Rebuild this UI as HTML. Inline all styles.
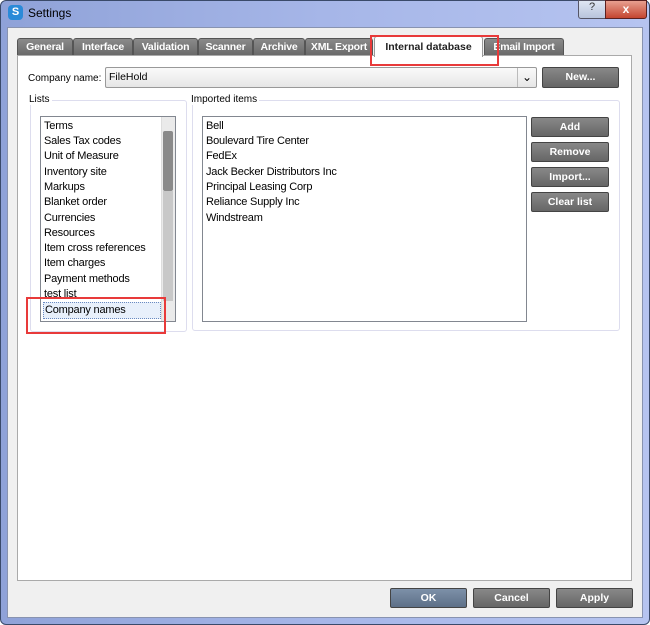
<!DOCTYPE html><html><head><style>
body{margin:0;width:650px;height:625px;overflow:hidden;background:#fff;font-family:"Liberation Sans",Tahoma,sans-serif;font-size:11px;}
.abs{position:absolute}
.frame{left:0;top:0;width:648px;height:623px;border:1px solid #3a4a6a;border-radius:6px;background:linear-gradient(90deg,#8fa2d8,#a6b6e8 50%,#b6c4f0);}
.client{left:7px;top:27px;width:634px;height:589px;background:#f0f0f0;border:1px solid #8893b0;}
.tab{top:38px;height:16px;background:linear-gradient(#8a8a8a,#6a6a6a);border:1px solid #555;border-bottom:none;border-radius:3px 3px 0 0;color:#fff;font-weight:bold;font-size:10.5px;text-align:center;line-height:16px;letter-spacing:-0.2px;white-space:nowrap;overflow:hidden}
.panel{left:17px;top:55px;width:613px;height:524px;background:#fff;border:1px solid #aaa;}
.btn{height:18px;background:linear-gradient(#888,#666);border:1px solid #444;border-radius:2px;color:#fff;font-weight:bold;text-align:center;line-height:18px;font-size:10.5px;}
.grp{border:1px solid #dde;border-radius:3px;}
.lb{background:#fff;border:1px solid #828790;}
.it{position:absolute;left:3px;font-size:11px;color:#000;white-space:nowrap;letter-spacing:-0.2px}
.red{border:2px solid #e83a3a;}
</style></head><body>
<div class="abs frame"></div>
<div class="abs" style="left:8px;top:5px;width:15px;height:15px;border-radius:4px;background:#2a8ad8;color:#fff;font-weight:bold;font-size:11px;text-align:center;line-height:15px">S</div>
<div class="abs" style="left:28px;top:6px;font-size:12px;color:#000">Settings</div>
<div class="abs" style="left:578px;top:0;width:26px;height:17px;border:1px solid #556;border-radius:0 0 0 3px;background:linear-gradient(#dfe6f3,#b8c4dc);text-align:center;font-size:11px;color:#333">?</div>
<div class="abs" style="left:605px;top:0;width:40px;height:17px;border:1px solid #5a2020;border-radius:0 0 3px 0;background:linear-gradient(#e8a090,#c44530);text-align:center;color:#fff;font-weight:bold;font-size:12px;line-height:16px">x</div>
<div class="abs client"></div>
<div class="abs tab" style="left:17px;width:54px">General</div>
<div class="abs tab" style="left:73px;width:58px">Interface</div>
<div class="abs tab" style="left:133px;width:63px">Validation</div>
<div class="abs tab" style="left:198px;width:53px">Scanner</div>
<div class="abs tab" style="left:253px;width:50px">Archive</div>
<div class="abs tab" style="left:305px;width:66px">XML Export</div>
<div class="abs tab" style="left:484px;width:78px">Email Import</div>
<div class="abs panel"></div>
<div class="abs" style="left:374px;top:36px;width:107px;height:20px;background:#fff;border:1px solid #999;border-bottom:none;border-radius:3px 3px 0 0;font-weight:bold;color:#222;text-align:center;line-height:20px;font-size:10.5px">Internal database</div>
<div class="abs red" style="left:370px;top:35px;width:125px;height:27px"></div>
<div class="abs" style="left:28px;top:73px;font-size:10px">Company name:</div>
<div class="abs" style="left:105px;top:67px;width:430px;height:19px;border:1px solid #999;border-radius:2px;background:linear-gradient(#fafafa,#e6e6e6)"><span style="position:absolute;left:3px;top:3px;font-size:10.5px">FileHold</span><span style="position:absolute;right:0;top:0;width:18px;height:19px;border-left:1px solid #bbb;text-align:center;font-size:12px;line-height:19px">&#8964;</span></div>
<div class="abs btn" style="left:542px;top:67px;width:75px;height:19px">New...</div>
<div class="abs grp" style="left:30px;top:100px;width:155px;height:230px"></div>
<div class="abs" style="left:29px;top:94px;background:#fff;padding-right:2px;font-size:10px">Lists</div>
<div class="abs grp" style="left:192px;top:100px;width:426px;height:229px"></div>
<div class="abs" style="left:191px;top:94px;background:#fff;padding-right:2px;font-size:10px">Imported items</div>
<div class="abs lb" style="left:40px;top:116px;width:134px;height:204px">
<div class="it" style="top:3px">Terms</div><div class="it" style="top:18px">Sales Tax codes</div><div class="it" style="top:33px">Unit of Measure</div><div class="it" style="top:49px">Inventory site</div><div class="it" style="top:64px">Markups</div><div class="it" style="top:79px">Blanket order</div><div class="it" style="top:95px">Currencies</div><div class="it" style="top:110px">Resources</div><div class="it" style="top:125px">Item cross references</div><div class="it" style="top:140px">Item charges</div><div class="it" style="top:156px">Payment methods</div><div class="it" style="top:171px">test list</div>
<div style="position:absolute;left:2px;top:185px;width:116px;height:15px;border:1px dotted #6a8ac0;background:#e8f0fb"><span style="position:absolute;left:1px;top:1px;letter-spacing:-0.2px">Company names</span></div>
<div style="position:absolute;right:0;top:0;width:13px;height:204px;background:#eaeaea;border-left:1px solid #ddd"><div style="position:absolute;left:1px;top:14px;width:10px;height:60px;background:#8a8a8a;border-radius:2px"></div><div style="position:absolute;left:1px;top:74px;width:10px;height:110px;background:#c8c8c8"></div></div>
</div>
<div class="abs red" style="left:26px;top:297px;width:136px;height:33px"></div>
<div class="abs lb" style="left:202px;top:116px;width:323px;height:204px">
<div class="it" style="top:3px">Bell</div><div class="it" style="top:18px">Boulevard Tire Center</div><div class="it" style="top:33px">FedEx</div><div class="it" style="top:49px">Jack Becker Distributors Inc</div><div class="it" style="top:64px">Principal Leasing Corp</div><div class="it" style="top:79px">Reliance Supply Inc</div><div class="it" style="top:95px">Windstream</div>
</div>
<div class="abs btn" style="left:531px;top:117px;width:76px">Add</div>
<div class="abs btn" style="left:531px;top:142px;width:76px">Remove</div>
<div class="abs btn" style="left:531px;top:167px;width:76px">Import...</div>
<div class="abs btn" style="left:531px;top:192px;width:76px">Clear list</div>
<div class="abs btn" style="left:390px;top:588px;width:75px;background:linear-gradient(#7d90a8,#5d7088)">OK</div>
<div class="abs btn" style="left:473px;top:588px;width:75px">Cancel</div>
<div class="abs btn" style="left:556px;top:588px;width:75px">Apply</div>
</body></html>
